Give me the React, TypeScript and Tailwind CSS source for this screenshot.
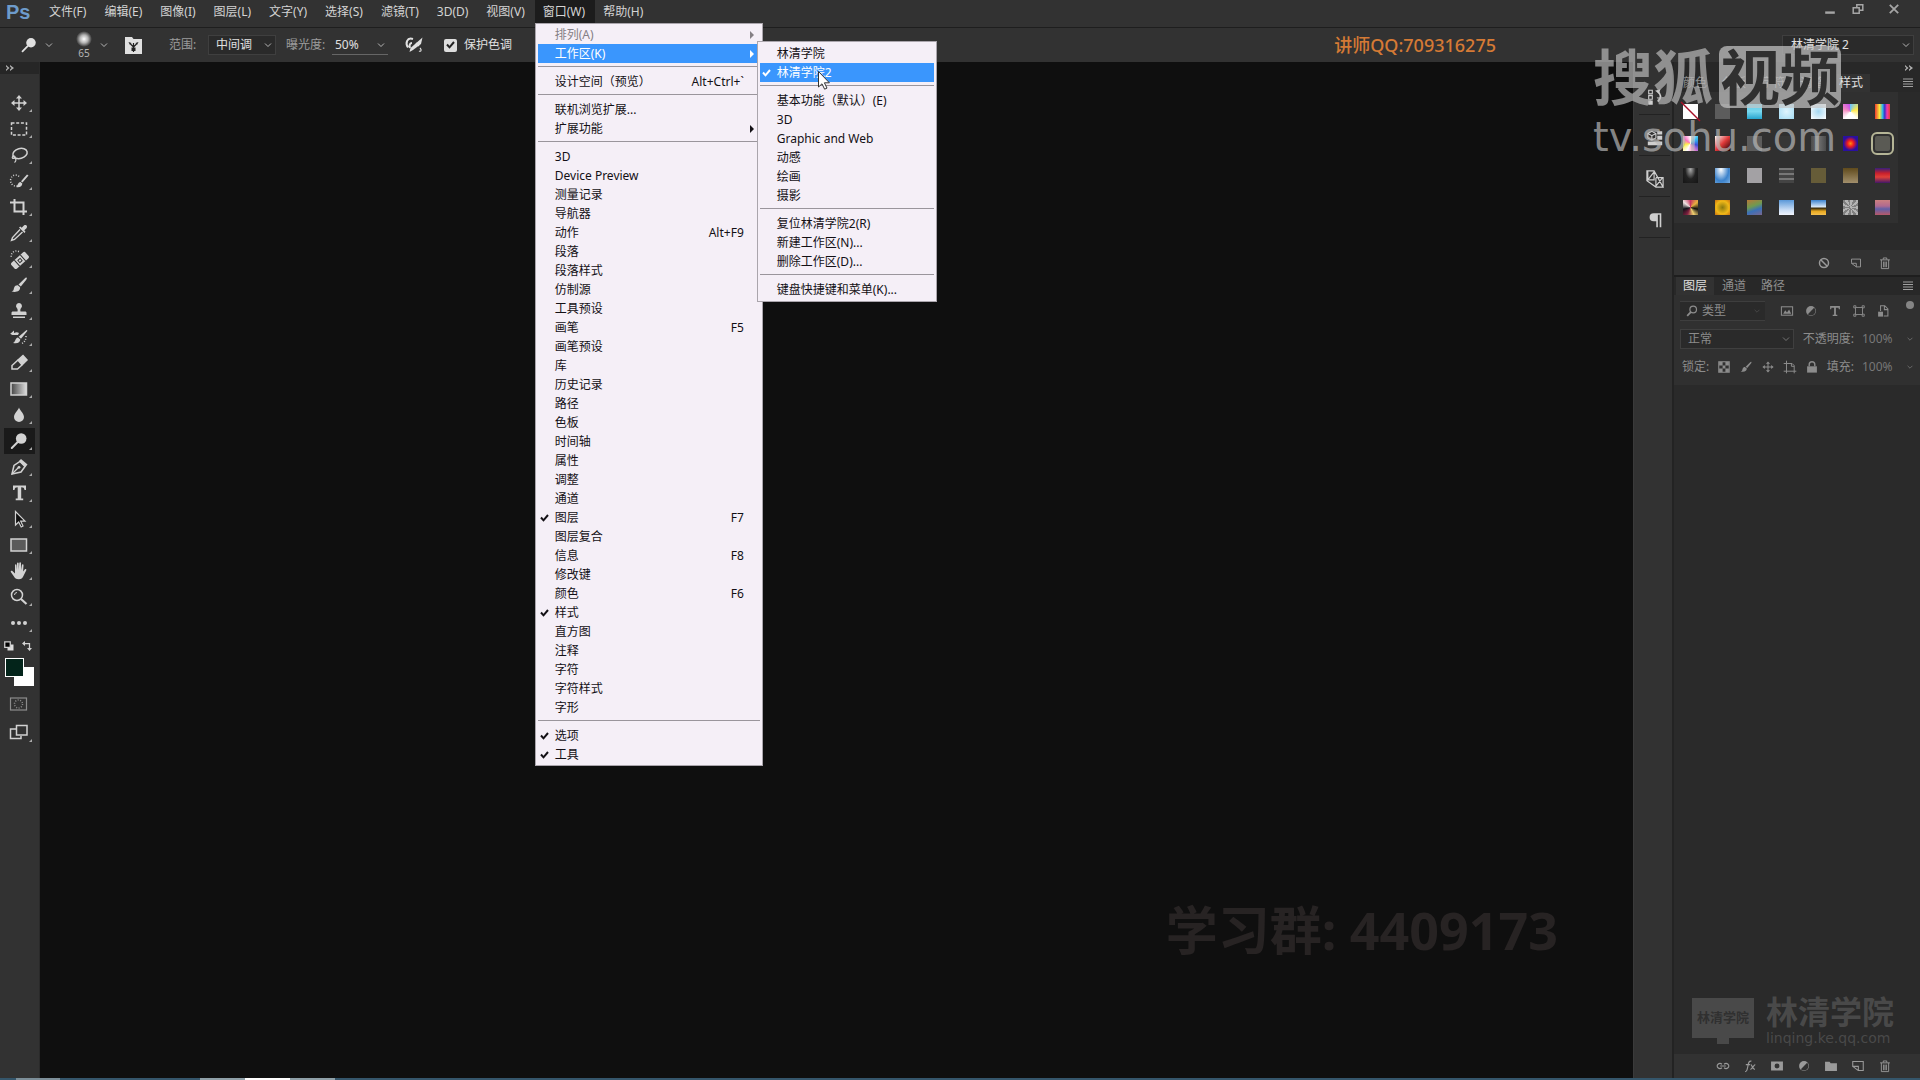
import { Fragment, type ReactNode } from "react";

type MenuEntry = {
  label?: string;
  shortcut?: string;
  checked?: boolean;
  disabled?: boolean;
  active?: boolean;
  submenu?: MenuEntry[] | true;
};

const separator: MenuEntry = {};

const workspaceMenu: MenuEntry[] = [
  { label: "林清学院" },
  { label: "林清学院2", checked: true, active: true },
  separator,
  { label: "基本功能（默认）(E)" },
  { label: "3D" },
  { label: "Graphic and Web" },
  { label: "动感" },
  { label: "绘画" },
  { label: "摄影" },
  separator,
  { label: "复位林清学院2(R)" },
  { label: "新建工作区(N)..." },
  { label: "删除工作区(D)..." },
  separator,
  { label: "键盘快捷键和菜单(K)..." },
];

const windowMenu: MenuEntry[] = [
  { label: "排列(A)", disabled: true, submenu: true },
  { label: "工作区(K)", active: true, submenu: workspaceMenu },
  separator,
  { label: "设计空间（预览）", shortcut: "Alt+Ctrl+`" },
  separator,
  { label: "联机浏览扩展..." },
  { label: "扩展功能", submenu: true },
  separator,
  { label: "3D" },
  { label: "Device Preview" },
  { label: "测量记录" },
  { label: "导航器" },
  { label: "动作", shortcut: "Alt+F9" },
  { label: "段落" },
  { label: "段落样式" },
  { label: "仿制源" },
  { label: "工具预设" },
  { label: "画笔", shortcut: "F5" },
  { label: "画笔预设" },
  { label: "库" },
  { label: "历史记录" },
  { label: "路径" },
  { label: "色板" },
  { label: "时间轴" },
  { label: "属性" },
  { label: "调整" },
  { label: "通道" },
  { label: "图层", shortcut: "F7", checked: true },
  { label: "图层复合" },
  { label: "信息", shortcut: "F8" },
  { label: "修改键" },
  { label: "颜色", shortcut: "F6" },
  { label: "样式", checked: true },
  { label: "直方图" },
  { label: "注释" },
  { label: "字符" },
  { label: "字符样式" },
  { label: "字形" },
  separator,
  { label: "选项", checked: true },
  { label: "工具", checked: true },
];

const menuBar = [
  "文件(F)", "编辑(E)", "图像(I)", "图层(L)", "文字(Y)", "选择(S)",
  "滤镜(T)", "3D(D)", "视图(V)", "窗口(W)", "帮助(H)",
];

// every icon is drawn on a 20x20 grid in currentColor
function Icon({ children, className = "size-5" }: { children: ReactNode; className?: string }) {
  return (
    <svg viewBox="0 0 20 20" className={`${className} shrink-0`} fill="none" stroke="currentColor" strokeWidth="1.5" aria-hidden="true">
      {children}
    </svg>
  );
}

function Chevron({ className = "size-3" }: { className?: string }) {
  return (
    <Icon className={className}>
      <path d="M4 7l6 6 6-6" />
    </Icon>
  );
}

function DoubleArrow() {
  return (
    <svg viewBox="0 0 8 6" className="h-1.5 w-2 text-[#b0b0b0]" fill="currentColor" aria-hidden="true">
      <path d="M0 0l3.500 3L0 6V4.500L1.500 3 0 1.500zM4 0l4 3-4 3V4.500L5.500 3 4 1.500z" />
    </svg>
  );
}

const moveShape = (
  <>
    <path d="M10 4v12M4 10h12" />
    <path d="M10 2l3 3.500H7zM10 18l3-3.500H7zM2 10l3.500-3v6zM18 10l-3.500-3v6z" fill="currentColor" stroke="none" />
  </>
);
const brushShape = (
  <>
    <path d="M17.500 2.500c.8.700.2 1.600-.4 2.400l-5.300 6.600-2.300-2 6.200-6c.6-.6 1.200-1.300 1.800-1z" fill="currentColor" stroke="none" />
    <path d="M8.800 10.200l2.300 2c.3 3.500-3.200 5.600-8.600 4.300 2.600-.8 1.900-2 2.700-4 .6-1.700 2-2.500 3.600-2.300z" fill="currentColor" stroke="none" />
  </>
);
const dodgeShape = (
  <>
    <circle cx="12.200" cy="7.500" r="5.300" fill="currentColor" stroke="none" />
    <path d="M8.500 11.300L2.800 17" strokeWidth="2" strokeLinecap="round" />
  </>
);
const trashShape = (
  <path d="M3 5.500h14M7.500 5V2.800h5V5M4.800 5.500V18h10.400V5.500M8 8v8M10 8v8M12 8v8" strokeWidth="1.300" />
);
const newShape = <path d="M2.500 9V3.500h15v13h-7v-6h-8zM2.500 10.500l8 6" strokeWidth="1.500" />;
const halfShape = (
  <>
    <circle cx="10" cy="10" r="7" fill="currentColor" stroke="none" />
    <path d="M14.500 5.500a6.300 6.300 0 0 1-9 9z" fill="#303030" stroke="none" />
  </>
);

const tools: { name: string; shape: ReactNode; active?: boolean }[] = [
  { name: "移动", shape: moveShape },
  { name: "矩形选框", shape: <rect x="2.500" y="4" width="15" height="12" strokeDasharray="3 1.700" /> },
  {
    name: "套索",
    shape: (
      <>
        <ellipse cx="11" cy="8.500" rx="7.300" ry="5" transform="rotate(-15 11 8.500)" />
        <path d="M5.500 11c-2.500-.5-3 2.500-1 2.500s2-2.500.5-2.300M6 13c1.500 1.500 1 3-.5 4.500" strokeWidth="1.200" />
      </>
    ),
  },
  {
    name: "快速选择",
    shape: (
      <>
        <path d="M10 5.500a5 5.500 0 1 0-1 8.800" strokeDasharray="1 1.600" />
        <path d="M19.500 4.500l-6 7-1.500-1.200L18 3.500zM11.500 11l1.800 1.500c0 3-2.800 4.300-6.300 3.500 2-1 1.500-4.500 4.500-5z" fill="currentColor" stroke="none" />
      </>
    ),
  },
  { name: "裁剪", shape: <path d="M5.500 2v12.500H18M1 5.500h13.500V18" strokeWidth="2" /> },
  {
    name: "吸管",
    shape: (
      <>
        <path d="M11 6.500l-7.500 8-1 3 3-1 8-7.500" strokeWidth="1.400" />
        <path d="M10 4.500l1.300-1 1.400 1.200 2.200-2.200c2-1.500 4.200.8 2.600 2.700l-2.200 2.100 1.200 1.500-1 1.200z" fill="currentColor" stroke="none" />
      </>
    ),
  },
  {
    name: "污点修复画笔",
    shape: (
      <>
        <path d="M10 2.500C5 .5 1 4.500 2.500 9.500" strokeDasharray="1 1.600" />
        <g transform="rotate(-42 11 11.500)">
          <rect x="1.500" y="7.500" width="19" height="8" rx="2" fill="currentColor" stroke="none" />
          <path d="M7 7.500v8M15 7.500v8" stroke="#303030" strokeWidth="1" />
          <path d="M9.500 10h3v3h-3z" stroke="#303030" strokeWidth="1" />
        </g>
      </>
    ),
  },
  { name: "画笔", shape: brushShape },
  {
    name: "仿制图章",
    shape: <path d="M10 2a3 3 0 0 1 2.200 5c-1 1.200-1 2 -.7 3.500H16c1 0 1.500.5 1.500 1.500v2h-15v-2c0-1 .5-1.500 1.500-1.500h4.500c.3-1.500.3-2.300-.7-3.500A3 3 0 0 1 10 2zM4 15.500h12V17H4z" fill="currentColor" stroke="none" />,
  },
  {
    name: "历史记录画笔",
    shape: (
      <>
        <path d="M17.500 3l1 .8-6.500 8-2.300-2zM9 10.500l2.300 2c-.2 3-2.800 4.500-7.300 3.500 2.500-.7 2-5 5-5.500z" fill="currentColor" stroke="none" />
        <path d="M1 7l4-3.500V7zM5 6c2-1 3.500-1 5 0l-1 2H1.500z" fill="currentColor" stroke="none" />
        <path d="M17 9c0 4-1.500 6-4 7.500" strokeDasharray="1 1.600" />
      </>
    ),
  },
  {
    name: "橡皮擦",
    shape: (
      <>
        <path d="M9 7l5-4.500L18 7l-5 5z" fill="currentColor" />
        <path d="M9 7l-6 5.500v3.500h5.500L13 12" />
      </>
    ),
  },
  {
    name: "渐变",
    shape: (
      <>
        <defs>
          <linearGradient id="tool-fade">
            <stop offset="0" stopColor="#444" />
            <stop offset="1" stopColor="#ddd" />
          </linearGradient>
        </defs>
        <rect x="2" y="4" width="15.500" height="12" fill="url(#tool-fade)" />
      </>
    ),
  },
  { name: "模糊", shape: <path d="M10 2.500c1 3 5 6 5 9.500a5 5 0 0 1-10 0c0-3.500 4-6.500 5-9.500z" fill="currentColor" stroke="none" /> },
  { name: "减淡", shape: dodgeShape, active: true },
  {
    name: "钢笔",
    shape: (
      <>
        <path d="M3 17l2-8.500 6-4 5 5-4 5.500z" />
        <path d="M3 17l6.500-6.500" strokeWidth="1.200" />
        <path d="M12 2l6.500 5.500-2 2.500-6.500-6z" fill="currentColor" stroke="none" />
        <circle cx="10" cy="10.300" r="1.400" fill="currentColor" stroke="none" />
      </>
    ),
  },
  {
    name: "横排文字",
    shape: <path d="M4 2.500h13v4.500h-1.500c-.3-2-1-2.700-3.300-2.700V15.500h2v1.700h-7.500v-1.700h2V4.300C6.500 4.300 5.800 5 5.500 7H4z" fill="currentColor" stroke="none" />,
  },
  { name: "路径选择", shape: <path d="M6.500 2.500v13.500l3.200-3 2.500 5 1.800-1-2.300-4.800h4.300z" fill="#111" strokeWidth="1.200" /> },
  { name: "矩形", shape: <rect x="2" y="4" width="15.500" height="12" fill="#5a5a5a" /> },
  {
    name: "抓手",
    shape: <path d="M6 9.500V4c0-1 1.500-1 1.500 0l.5 5V2.500c0-1.200 1.700-1.200 1.700 0V9l.6-7c0-1.200 1.700-1.100 1.700 0v7.300l.9-5.300c.2-1 1.700-.8 1.600.3l-.4 6.200 1.600-2c.7-.9 2-.2 1.600.8l-3 6c-.8 2-2 3-4.500 3-2.800 0-4-1-5-3L1.800 11c-.5-1 .8-1.800 1.600-1L6 12.500z" fill="currentColor" stroke="none" />,
  },
  {
    name: "缩放",
    shape: (
      <>
        <circle cx="8" cy="8" r="5.500" />
        <path d="M12 12l5.500 5" strokeWidth="2.200" />
        <path d="M5.500 8A2.500 2.500 0 0 1 8 5.500" strokeWidth="1" />
      </>
    ),
  },
  {
    name: "编辑工具栏",
    shape: (
      <g fill="currentColor" stroke="none">
        <circle cx="4" cy="10" r="2" />
        <circle cx="10" cy="10" r="2" />
        <circle cx="16" cy="10" r="2" />
      </g>
    ),
  },
];

const styleSwatches = [
  "bg-[#5c5c5c]",
  "bg-[linear-gradient(#63cbe8,#79d8ef_50%,#27a5cf)]",
  "bg-[radial-gradient(#dff4fd,#a5dcf4)]",
  "bg-[radial-gradient(#a5d8f2,#ffffff)]",
  "bg-[conic-gradient(from_0deg,#6fc4f5,#ffe94a_20%,#ffffff_40%,#ffffff_60%,#f58bc0_80%,#c04df0)]",
  "bg-[linear-gradient(90deg,#f03a30,#f7e83c_30%,#35b8e0_50%,#3533c8_65%,#f03ab0_80%,#e84030)]",
  "bg-[conic-gradient(#ffffff,#35c0f0,#3a50d8,#ff80d0,#ffffff,#fff04a,#ff70c0,#ffffff)]",
  "bg-[linear-gradient(135deg,#ffffff,#e03a3a_50%,#200000)]",
  "bg-[#5c5c5c]",
  "bg-[#363636]",
  "bg-[linear-gradient(90deg,#4b4b4b,#707070,#4b4b4b)]",
  "bg-[radial-gradient(#ff8a10,#ee1a20_30%,#2a10a0_65%)]",
  "rounded-xs bg-[#5a5a54] outline-2 outline-offset-2 outline-[#b5b596]",
  "bg-[radial-gradient(at_50%_10%,#aaaaaa,#222222_50%,#151515)]",
  "bg-[radial-gradient(at_40%_10%,#ffffff,#3b82cc_60%,#79aee0)]",
  "bg-[#a3a1a4]",
  "bg-[repeating-linear-gradient(#777777_0_2px,#444444_2px_5px)]",
  "bg-[#665c38]",
  "bg-[linear-gradient(#5f4a1c,#a28f6c)]",
  "bg-[linear-gradient(#35207a,#c8202c_35%,#e04038_60%,#40186a)]",
  "bg-[conic-gradient(#c93560,#e8b040,#101010,#f0d070,#802040,#101018,#eee0e0,#c93560)]",
  "bg-[radial-gradient(at_50%_50%,#8b7a10,#f0b818_60%,#c87010)]",
  "bg-[linear-gradient(160deg,#b87838,#6f9a50_40%,#3a70b8_65%,#7a6890)]",
  "bg-[linear-gradient(#5a98d8,#c8dcf4_65%,#f0f4fc)]",
  "bg-[linear-gradient(#3b82cc,#d8e8f8_45%,#3a2c0a_55%,#e8a820_75%,#f4c050)]",
  "bg-[repeating-conic-gradient(#b4b4b4_0_20deg,#808080_20deg_40deg)]",
  "bg-[linear-gradient(#cc8080,#b06a90_40%,#6060a8_60%,#b85868)]",
];

const layerFilters: { name: string; shape: ReactNode }[] = [
  {
    name: "像素图层",
    shape: (
      <>
        <rect x="2" y="4" width="16" height="12" />
        <path d="M4.500 14l3-5 2.500 3 3-4 3 6z" fill="currentColor" stroke="none" />
      </>
    ),
  },
  { name: "调整图层", shape: halfShape },
  { name: "文字图层", shape: <path d="M3 3h14v4.500h-1.500L15 5.200h-3.700v10h2V17H6.700v-1.800h2v-10H5L4.500 7.500H3z" fill="currentColor" stroke="none" /> },
  { name: "形状图层", shape: <path d="M5 5h10v10H5zM2.500 2.500h3v3h-3zM14.500 2.500h3v3h-3zM2.500 14.500h3v3h-3zM14.500 14.500h3v3h-3z" fill="#303030" strokeWidth="1.300" /> },
  {
    name: "智能对象",
    shape: (
      <>
        <path d="M6.500 10V2.500h6L17 7v10h-6M12 3v5h5" />
        <rect x="3" y="11" width="7" height="7" fill="currentColor" stroke="none" />
      </>
    ),
  },
];

const layerLocks: { name: string; shape: ReactNode }[] = [
  {
    name: "锁定透明像素",
    shape: (
      <>
        <rect x="2.500" y="2.500" width="15" height="15" />
        <path d="M3 3h5v5H3zM12 3h5v5h-5zM8 8h4v4H8zM3 12h5v5H3zM12 12h5v5h-5z" fill="currentColor" stroke="none" />
      </>
    ),
  },
  { name: "锁定图像像素", shape: brushShape },
  { name: "锁定位置", shape: moveShape },
  { name: "锁定画板", shape: <path d="M5 1v18M1 5h12l3 3v11M1 16h18M12 5v4h4" strokeWidth="1.400" /> },
  {
    name: "锁定全部",
    shape: (
      <>
        <rect x="3" y="9" width="14" height="9" fill="currentColor" stroke="none" />
        <path d="M6 9V6.500a4 4 0 0 1 8 0V9" strokeWidth="2" />
      </>
    ),
  },
];

const layerActions: { name: string; shape: ReactNode }[] = [
  { name: "链接图层", shape: <path d="M8.500 7.500a4 3.500 0 1 0 0 5M11.500 7.500a4 3.500 0 1 1 0 5M6 10h8" strokeWidth="1.600" /> },
  {
    name: "图层样式",
    shape: <path d="M3 18c3 0 3-3 4-8s1.500-7.500 5-7M4 8h6M11 8c2 0 2 6 6 7M17.500 8c-2 0-4.500 6.500-7 7" strokeWidth="1.700" />,
  },
  { name: "图层蒙版", shape: <path d="M1.500 3.500h17v13h-17zM10 6.500a3.500 3.500 0 1 0 0 7 3.500 3.500 0 0 0 0-7z" fill="currentColor" fillRule="evenodd" stroke="none" /> },
  { name: "新调整图层", shape: halfShape },
  { name: "新建组", shape: <path d="M1.500 4h6.500l1.500 2h9v11h-17z" fill="currentColor" stroke="none" /> },
  { name: "新建图层", shape: newShape },
  { name: "删除图层", shape: trashShape },
];

const dockPanels: { name: string; shape: ReactNode }[] = [
  {
    name: "历史记录",
    shape: (
      <>
        <path d="M3 2.500h4v4H3zM3 8.500h4v4H3z" strokeWidth="1.200" />
        <path d="M2.500 14h5v4.500h-5zM10 3l6-1.500L14.500 6z" fill="currentColor" stroke="none" />
        <path d="M13 4c4 3 4.500 7 0 11" strokeWidth="2" />
      </>
    ),
  },
  {
    name: "库",
    shape: (
      <>
        <path d="M2 5l4.500-2.500L11 5v5l-4.500 2.500L2 10zM2 5l4.500 2.500L11 5M6.500 7.500v5" strokeWidth="1.200" />
        <path d="M12.500 2.500h5.500V6h-5.500zM12.500 7.500h5.500V12h-5.500zM2 14h16v4H2z" fill="currentColor" stroke="none" />
      </>
    ),
  },
  { name: "图层复合", shape: <path d="M1 1h8l10 18h-8L1 12zM2 1v10h7V1M11 8.500h8V19M11 8.500V18M2 11l7-9M11 18l7-9" strokeWidth="1.300" /> },
  { name: "段落", shape: <path d="M8.500 2.500H17V18h-1.800V4.300h-2V18h-1.800v-6.500H8.500a4.500 4.500 0 0 1 0-9z" fill="currentColor" stroke="none" /> },
];

function Check() {
  return (
    <svg viewBox="0 0 9 8" className="h-2 w-[9px]" fill="none" stroke="currentColor" strokeWidth="2" aria-hidden="true">
      <path d="M1 3.500l2.500 2.800L8 1" />
    </svg>
  );
}

function MenuRow({ entry }: { entry: MenuEntry }) {
  const tone = entry.active
    ? "bg-[#3a96fd] text-white"
    : entry.disabled
      ? "text-[#858085]"
      : "text-[#131015]";
  return (
    <li role="none" className="relative">
      <button
        type="button"
        role={entry.checked ? "menuitemcheckbox" : "menuitem"}
        aria-checked={entry.checked}
        disabled={entry.disabled}
        className={`flex h-[19px] w-full items-center text-left ${tone}`}
      >
        <span className="flex w-[17px] shrink-0 pl-0.5">{entry.checked && <Check />}</span>
        <span className="flex-1 whitespace-nowrap">{entry.label}</span>
        {entry.shortcut && <span>{entry.shortcut}</span>}
        <span className="flex w-4 shrink-0 justify-center">
          {entry.submenu && (
            <svg viewBox="0 0 4 8" className="h-2 w-1" fill="currentColor" aria-hidden="true">
              <path d="M0 0l4 4-4 4z" />
            </svg>
          )}
        </span>
      </button>
      {Array.isArray(entry.submenu) && (
        <div className="absolute -top-[3px] left-full z-10 -ml-[3px] w-[180px]">
          <Menu entries={entry.submenu} className="py-0.5" />
          <svg viewBox="0 0 12 19" className="absolute top-[30px] left-[61px] h-[19px] w-3" aria-hidden="true">
            <path d="M.5.500v15.500l3.500-3.200 2.600 5.400 2.400-1.100-2.600-5.300h5z" fill="#fff" stroke="#333" />
          </svg>
        </div>
      )}
    </li>
  );
}

function Menu({ entries, className }: { entries: MenuEntry[]; className: string }) {
  return (
    <ul role="menu" className={`border border-[#aaa5ac] bg-[#f5eff7] px-0.5 ${className}`}>
      {entries.map((entry, i) => (
        <Fragment key={i}>
          {entry.label ? (
            <MenuRow entry={entry} />
          ) : (
            <li role="separator" className="h-[9px] pt-[3px]">
              <div className="h-px bg-[#9a959c]" />
            </li>
          )}
        </Fragment>
      ))}
    </ul>
  );
}

function Dropdown({ label, value, className, selectClass }: { label: string; value: string; className: string; selectClass: string }) {
  return (
    <div className={`grid h-5 items-center border border-[#3f3f3f] bg-[#2a2a2a] ${className}`}>
      <select aria-label={label} className={`h-full w-full appearance-none [grid-area:1/1] ${selectClass}`}>
        <option>{value}</option>
      </select>
      <span className="pointer-events-none justify-self-end pr-0.5 [grid-area:1/1]">
        <Chevron className="size-2.5" />
      </span>
    </div>
  );
}

function TitleBar() {
  return (
    <header className="flex h-7 border-b border-[#1e1e1e]">
      <div className="w-[41px] pl-1.5 font-['Liberation_Sans',sans-serif] text-xl leading-6 font-bold text-[#6d9bcb]">Ps</div>
      <nav className="flex flex-1">
        {menuBar.map((name) => (
          <div key={name} className="relative h-[23px]">
            <button
              type="button"
              className={`h-full pr-2.5 pl-2 whitespace-nowrap text-[#d4d4d4] ${name === "窗口(W)" ? "bg-[#1c1c1c]" : ""}`}
            >
              {name}
            </button>
            {name === "窗口(W)" && (
              <div className="absolute top-full left-0 z-20 w-[228px]">
                <Menu entries={windowMenu} className="py-px" />
              </div>
            )}
          </div>
        ))}
      </nav>
      <div className="flex h-[18px] items-center gap-4 pr-5 text-[#a5a5a5]">
        <button type="button" aria-label="最小化">
          <Icon className="size-3"><path d="M2 16h16" strokeWidth="4" /></Icon>
        </button>
        <button type="button" aria-label="还原">
          <Icon className="size-3"><path d="M2 8h10v9H2zM8 8V3h10v9h-6" strokeWidth="2.500" /></Icon>
        </button>
        <button type="button" aria-label="关闭" className="ml-2">
          <Icon className="size-3"><path d="M3 3l14 14M17 3L3 17" strokeWidth="3" /></Icon>
        </button>
      </div>
    </header>
  );
}

function OptionsBar() {
  return (
    <div className="flex h-[34px] items-center text-[#e0e0e0]">
      <button type="button" aria-label="减淡工具预设" className="flex w-[71px] items-center gap-1.5 pl-5">
        <Icon className="size-[18px]">{dodgeShape}</Icon>
        <Chevron className="size-2.5" />
      </button>
      <button type="button" aria-label="画笔大小" className="flex w-[54px] items-center gap-0.5">
        <span className="flex w-[26px] flex-col items-center text-[10px] leading-3 text-[#b5b5b5]">
          <span className="size-4 rounded-full bg-[radial-gradient(#ffffff,#b5b5b5_35%,#323232_70%)]" />
          65
        </span>
        <Chevron className="size-2.5" />
      </button>
      <button type="button" aria-label="切换画笔面板">
        <svg viewBox="0 0 17 17" className="size-[17px]" aria-hidden="true">
          <path d="M0 0h7l1.500 2H17v15H0z" fill="#e0e0e0" />
          <path d="M8.500 15V9.500M8.500 10L5.500 7M8.500 10l3-3M8.500 9V6" stroke="#222" strokeWidth="1.200" />
          <path d="M6.500 10.500h4V14h-4zM3.500 5l3 1-1.500 2zM13.500 5l-3 1 1.500 2z" fill="#222" />
        </svg>
      </button>
      <span className="w-[66px] pl-[27px] whitespace-nowrap text-[#9c9c9c]">范围:</span>
      <Dropdown label="范围" value="中间调" className="w-[68px]" selectClass="pl-[7px]" />
      <label htmlFor="exposure" className="w-14 pl-2.5 whitespace-nowrap text-[#9c9c9c]">曝光度:</label>
      <div className="flex h-5 w-14 items-center border-b border-[#666]">
        <input id="exposure" type="text" defaultValue="50%" className="w-[44px] pl-[3px]" />
        <Chevron className="size-2.5" />
      </div>
      <button type="button" aria-label="喷枪" className="ml-4">
        <Icon>
          <path d="M9 4C3 2 1 8 4 12.500M8 8c-2 0-3 2-2 5" strokeWidth="2" />
          <path d="M18.500 2.500L17 9l-8 6-3.500 2 1-4z" fill="currentColor" stroke="none" />
          <path d="M12 8l3 3M16 13c2 2 1 4-1 3" strokeWidth="1.200" />
        </Icon>
      </button>
      <label className="ml-5 flex items-center gap-[7px] whitespace-nowrap">
        <span className="grid place-items-center">
          <input type="checkbox" defaultChecked className="size-[13px] appearance-none rounded-xs bg-[#dedede] [grid-area:1/1]" />
          <span className="pointer-events-none text-[#222] [grid-area:1/1]"><Check /></span>
        </span>
        保护色调
      </label>
      <span className="mr-[286px] ml-auto text-lg font-medium whitespace-nowrap text-[#d57a35]">讲师QQ:709316275</span>
      <Dropdown label="工作区" value="林清学院 2" className="mr-1.5 w-[132px]" selectClass="pl-2" />
    </div>
  );
}

function Toolbar() {
  return (
    <aside className="w-10 shrink-0 border-r border-[#2a2a2a] text-[#d2d2d2]">
      <div className="flex h-3 items-center bg-[#262626] pl-1.5"><DoubleArrow /></div>
      <div className="flex flex-col px-1 pt-4">
        {tools.map((tool) => (
          <button
            key={tool.name}
            type="button"
            aria-label={tool.name}
            className={`flex h-[26px] items-center pl-[5px] ${tool.active ? "bg-[#1a1a1a]" : ""}`}
          >
            <Icon>{tool.shape}</Icon>
            <svg viewBox="0 0 3 3" className="mb-1 size-[3px] self-end" aria-hidden="true">
              <path d="M3 0v3H0z" fill="#aaa" />
            </svg>
          </button>
        ))}
        <div className="flex h-5 items-center justify-between pr-[3px]">
          <button type="button" aria-label="默认前景色和背景色">
            <Icon className="size-2.5">
              <path d="M7 7h12v12H7z" fill="#ddd" stroke="none" />
              <path d="M1.500 1.500h11v11h-11z" fill="#000" strokeWidth="2.500" />
            </Icon>
          </button>
          <button type="button" aria-label="切换前景色和背景色">
            <Icon className="size-2.5">
              <path d="M4 5h11v11" strokeWidth="2.500" />
              <path d="M0 5l6-5v10zM15 20l-5-6h10z" fill="currentColor" stroke="none" />
            </Icon>
          </button>
        </div>
        <div className="grid grid-cols-[9px_10px_10px] grid-rows-[9px_10px_9px] pt-0.5 pl-px">
          <button type="button" aria-label="背景色" className="bg-white [grid-area:2/2/4/4]" />
          <button type="button" aria-label="前景色" className="border border-white bg-[#03241a] [grid-area:1/1/3/3]" />
        </div>
        <button type="button" aria-label="快速蒙版" className="flex h-9 items-center pl-[5px] text-[#8d8d8d]">
          <Icon>
            <rect x="1.500" y="4" width="16" height="12" strokeWidth="1.200" />
            <circle cx="9.500" cy="10" r="4" strokeDasharray="1 1.500" />
          </Icon>
        </button>
        <button type="button" aria-label="屏幕模式" className="flex h-5 items-center pl-[5px]">
          <Icon><path d="M7 7H1.500v9.500H12V14M7.500 3.500H18V13H7.500z" /></Icon>
          <svg viewBox="0 0 3 3" className="size-[3px] self-end" aria-hidden="true">
            <path d="M3 0v3H0z" fill="#aaa" />
          </svg>
        </button>
      </div>
    </aside>
  );
}

function PanelTabs({ tabs, active, spacing }: { tabs: string[]; active: string; spacing: string }) {
  return (
    <div className="flex h-[18px] items-stretch bg-[#282828]">
      <div role="tablist" className={`flex flex-1 ${spacing}`}>
        {tabs.map((tab) => (
          <button
            key={tab}
            type="button"
            role="tab"
            aria-selected={tab === active}
            className={`px-[7px] leading-[18px] ${tab === active ? "bg-[#323232] text-[#e0e0e0]" : "text-[#8d8d8d]"}`}
          >
            {tab}
          </button>
        ))}
      </div>
      <button type="button" aria-label="面板菜单" className="pr-[7px] text-[#a0a0a0]">
        <Icon className="size-2.5"><path d="M0 2h20M0 7h20M0 12h20M0 17h20" strokeWidth="2" /></Icon>
      </button>
    </div>
  );
}

function StylesPanel() {
  return (
    <section>
      <PanelTabs tabs={["颜色", "色板", "字符", "调整", "样式"]} active="样式" spacing="gap-px pl-0.5" />
      <div className="h-[158px] bg-[#2a2a2a]">
        <div className="grid w-[224px] grid-cols-7 gap-y-[17px] bg-[#303030] pt-3 pb-2">
          <button type="button" aria-label="无样式" className="mx-auto size-[15px] bg-white">
            <svg viewBox="0 0 15 15" className="size-full overflow-visible" aria-hidden="true">
              <path d="M-2-2l19 19" stroke="#a81028" strokeWidth="1.500" />
            </svg>
          </button>
          {styleSwatches.map((fill, i) => (
            <button key={i} type="button" aria-label={`样式 ${i + 1}`} className={`mx-auto size-[15px] ${fill}`} />
          ))}
        </div>
      </div>
      <div className="flex h-[25px] items-center justify-end gap-4 pr-7 text-[#9a9a9a]">
        <button type="button" aria-label="清除样式">
          <Icon className="size-3"><circle cx="10" cy="10" r="7.500" strokeWidth="2.500" /><path d="M5 5l10 10" strokeWidth="2.500" /></Icon>
        </button>
        <button type="button" aria-label="新建样式" className="ml-1"><Icon className="size-3">{newShape}</Icon></button>
        <button type="button" aria-label="删除样式"><Icon className="size-3.5">{trashShape}</Icon></button>
      </div>
    </section>
  );
}

function PercentField({ id, label }: { id: string; label: string }) {
  return (
    <div className="ml-auto flex items-center">
      <label htmlFor={id} className="pr-2 whitespace-nowrap">{label}</label>
      <input id={id} type="text" defaultValue="100%" className="w-11 text-[#777]" />
      <Chevron className="size-2" />
    </div>
  );
}

function LayersPanel() {
  return (
    <section className="flex flex-1 flex-col border-t-2 border-[#1e1e1e]">
      <PanelTabs tabs={["图层", "通道", "路径"]} active="图层" spacing="gap-px pl-0.5" />
      <div className="flex flex-col gap-2 bg-[#303030] px-1.5 pt-1.5 pb-2 text-[#8c8c8c]">
        <div className="flex h-5 items-center">
          <div className="grid h-5 w-[85px] items-center border-y border-[#3e3e3e] bg-[#2a2a2a]">
            <span className="pl-1.5 [grid-area:1/1]">
              <Icon className="size-3"><circle cx="12" cy="7.500" r="5.500" strokeWidth="2" /><path d="M8 12l-6 6" strokeWidth="3" /></Icon>
            </span>
            <select aria-label="图层过滤" className="w-full appearance-none pl-[22px] [grid-area:1/1]">
              <option>类型</option>
            </select>
            <span className="pointer-events-none justify-self-end pr-1 text-[#555] [grid-area:1/1]"><Chevron className="size-2" /></span>
          </div>
          <div className="ml-[15px] flex gap-2.5">
            {layerFilters.map((f) => (
              <button key={f.name} type="button" aria-label={f.name}><Icon className="size-3.5">{f.shape}</Icon></button>
            ))}
          </div>
          <button type="button" aria-label="过滤开关" className="ml-auto size-2 self-start rounded-full bg-[#858585]" />
        </div>
        <div className="flex h-5 items-center">
          <Dropdown label="混合模式" value="正常" className="w-[114px]" selectClass="pl-[7px]" />
          <PercentField id="opacity" label="不透明度:" />
        </div>
        <div className="flex h-5 items-center">
          <span className="pl-0.5 whitespace-nowrap">锁定:</span>
          <div className="ml-2 flex gap-2">
            {layerLocks.map((l) => (
              <button key={l.name} type="button" aria-label={l.name}><Icon className="size-3.5">{l.shape}</Icon></button>
            ))}
          </div>
          <PercentField id="fill" label="填充:" />
        </div>
      </div>
      <div className="flex flex-1 flex-col justify-end bg-[#2a2a2a] pb-2">
        <div className="flex gap-3 pl-[18px] text-[#494949]">
          <div className="pt-2">
            <div className="flex h-10 w-[62px] items-center justify-center bg-[#494949] text-[13px] font-bold text-[#303030]">林清学院</div>
            <div className="mx-auto h-1.5 w-3 bg-[#494949]" />
          </div>
          <div className="pt-1">
            <div className="text-[32px] leading-9 font-bold whitespace-nowrap">林清学院</div>
            <div className="font-['DejaVu_Sans',sans-serif] text-sm leading-4">linqing.ke.qq.com</div>
          </div>
        </div>
      </div>
      <div className="flex h-6 items-center justify-end gap-[13px] pr-7 text-[#9a9a9a]">
        {layerActions.map((a) => (
          <button key={a.name} type="button" aria-label={a.name}><Icon className="size-3.5">{a.shape}</Icon></button>
        ))}
      </div>
    </section>
  );
}

function IconDock() {
  return (
    <aside className="flex w-[41px] shrink-0 flex-col border-r-2 border-l border-[#232323] border-l-[#3a3a3a] pr-0.5 pl-[5px] text-[#cfcfcf]">
      <div className="h-3" />
      {dockPanels.map((p) => (
        <button key={p.name} type="button" aria-label={p.name} className="flex h-[41px] items-center justify-center border-b border-[#222] pt-1.5">
          <Icon className="size-[18px]">{p.shape}</Icon>
        </button>
      ))}
    </aside>
  );
}

function Watermarks() {
  return (
    <div className="pointer-events-none">
      <div className="absolute top-[46px] right-[79px] text-[#b8b8b8]/70">
        <div className="flex items-center text-[60px] leading-[62px] font-bold">
          <span className="mr-1.5">搜狐</span>
          <span className="rounded-lg bg-[#c8c8c8]/70 px-px text-[#303030]">视频</span>
        </div>
        <div className="font-['DejaVu_Sans',sans-serif] text-[40px] leading-[58px]">tv.sohu.com</div>
      </div>
      <div className="absolute right-[362px] bottom-[114px] text-[52px] leading-[72px] font-bold text-[#272323]">学习群: 4409173</div>
    </div>
  );
}

export default function App() {
  return (
    <div className="relative flex min-h-screen flex-col overflow-hidden bg-[#323232] font-['Noto_Sans','Noto_Sans_CJK_SC',sans-serif] text-xs">
      <TitleBar />
      <OptionsBar />
      <div className="flex flex-1">
        <Toolbar />
        <main className="flex-1 bg-[#0f0f0f]" />
        <IconDock />
        <div className="flex w-[246px] shrink-0 flex-col">
          <div className="flex h-3 items-center justify-end bg-[#282828] pr-[7px]"><DoubleArrow /></div>
          <StylesPanel />
          <LayersPanel />
        </div>
      </div>
      <div className="flex h-0.5 bg-[#35566b]">
        <div className="ml-4 w-11 bg-[#7d8f99]" />
        <div className="ml-[140px] w-[45px] bg-[#8fa0a8]" />
        <div className="w-[45px] bg-white" />
        <div className="w-[45px] bg-[#8fa0a8]" />
      </div>
      <Watermarks />
    </div>
  );
}
